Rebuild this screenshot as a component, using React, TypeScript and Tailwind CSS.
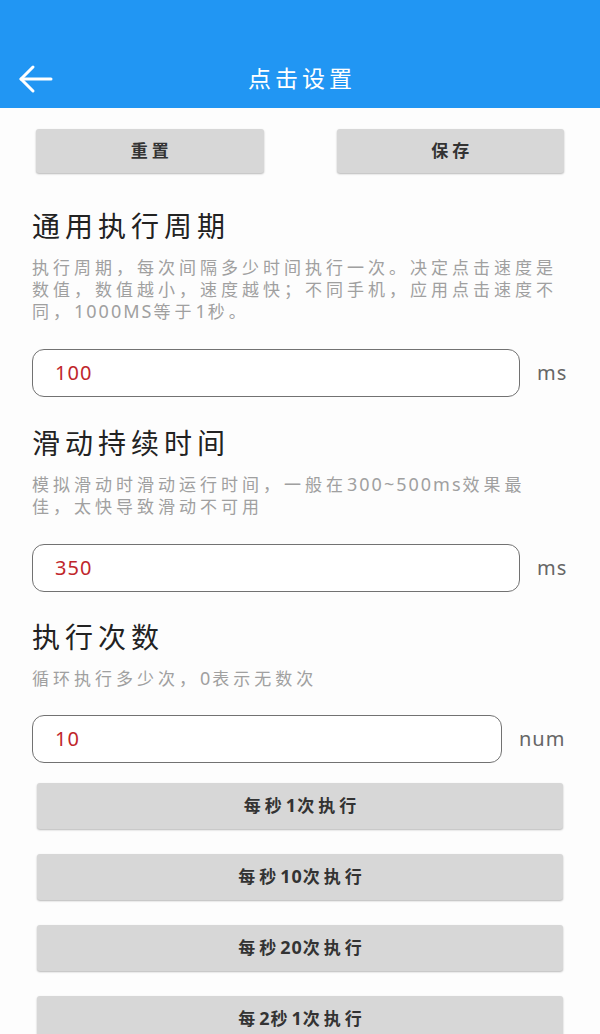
import React from 'react';

const font = { fontFamily: '"Noto Sans", "Noto Sans CJK SC", sans-serif' };

// latin runs get their own size/spacing, the CJK around them keeps the wide tracking
function Mixed({ text, latin }: { text: string; latin: string }) {
  const parts = text.split(/([0-9A-Za-z~]+)/);
  return (
    <>
      {parts.map((p, i) =>
        /^[0-9A-Za-z~]+$/.test(p) ? (
          <span key={i} className={latin}>
            {p}
          </span>
        ) : (
          <React.Fragment key={i}>{p}</React.Fragment>
        )
      )}
    </>
  );
}

function BackArrow() {
  return (
    <svg width="36" height="30" viewBox="0 0 36 30" fill="none" stroke="white" strokeWidth={3} strokeLinecap="round" strokeLinejoin="round">
      <path d="M3 15h30" />
      <path d="M15 3L3 15l12 12" />
    </svg>
  );
}

function GrayButton({ label, className = '' }: { label: string; className?: string }) {
  return (
    <button
      className={`flex items-center justify-center rounded-[3px] bg-[#d7d7d7] text-[17px] font-bold tracking-[4px] text-[#333] shadow-[0_1px_2px_rgba(0,0,0,0.28)] ${className}`}
    >
      <span className="pl-[4px]">
        <Mixed text={label} latin="text-[18px] leading-[18px] tracking-[1px]" />
      </span>
    </button>
  );
}

function ValueInput({ value, unit, boxWidth }: { value: string; unit: string; boxWidth: string }) {
  return (
    <div className="flex items-center gap-[17px] px-[32px]">
      <div className={`flex h-[48px] items-center rounded-[12px] border-[1.5px] border-[#727272] bg-white pl-[22px] ${boxWidth}`}>
        <span className="text-[20px] tracking-[1px] text-[#c0262b]">{value}</span>
      </div>
      <span className="text-[20px] tracking-[1px] text-[#666]">{unit}</span>
    </div>
  );
}

function Section({ title, lines, top }: { title: string; lines: string[]; top: string }) {
  return (
    <>
      <h2 className={`px-[32px] text-[28px] leading-[36px] tracking-[5px] text-[#222] ${top}`}>{title}</h2>
      <div className="mt-[13px] px-[32px] text-[17px] leading-[22px] tracking-[4px] text-[#a0a0a0]">
        {lines.map((l, i) => (
          <div key={i} className="h-[22px] whitespace-nowrap">
            <Mixed text={l} latin="text-[18px] leading-[18px] tracking-[2px]" />
          </div>
        ))}
      </div>
    </>
  );
}

export default function App() {
  return (
    <div className="min-h-[1034px] w-[600px] overflow-hidden bg-[#fdfdfd]" style={font}>
      {/* Top bar */}
      <div className="flex h-[108px] flex-col justify-end bg-[#2196f3]">
        <div className="relative flex h-[60px] items-center justify-center">
          <div className="absolute left-[18px] top-[16px]">
            <BackArrow />
          </div>
          <span className="pl-[4px] text-[23px] tracking-[4px] text-white">点击设置</span>
        </div>
      </div>

      {/* Reset / Save */}
      <div className="grid grid-cols-2 gap-[73px] px-[36px] pt-[21px]">
        <GrayButton label="重置" className="h-[44px]" />
        <GrayButton label="保存" className="h-[44px]" />
      </div>

      <Section
        top="mt-[35px]"
        title="通用执行周期"
        lines={[
          '执行周期，每次间隔多少时间执行一次。决定点击速度是',
          '数值，数值越小，速度越快；不同手机，应用点击速度不',
          '同，1000MS等于1秒。',
        ]}
      />
      <div className="mt-[26px]">
        <ValueInput value="100" unit="ms" boxWidth="w-[488px]" />
      </div>

      <Section
        top="mt-[28px]"
        title="滑动持续时间"
        lines={['模拟滑动时滑动运行时间，一般在300~500ms效果最', '佳，太快导致滑动不可用']}
      />
      <div className="mt-[26px]">
        <ValueInput value="350" unit="ms" boxWidth="w-[488px]" />
      </div>

      <Section top="mt-[27px]" title="执行次数" lines={['循环执行多少次，0表示无数次']} />
      <div className="mt-[25px]">
        <ValueInput value="10" unit="num" boxWidth="w-[470px]" />
      </div>

      {/* Presets */}
      <div className="mt-[20px] flex flex-col gap-[25px] px-[37px]">
        <GrayButton label="每秒1次执行" className="h-[46px]" />
        <GrayButton label="每秒10次执行" className="h-[46px]" />
        <GrayButton label="每秒20次执行" className="h-[46px]" />
        <GrayButton label="每2秒1次执行" className="h-[46px]" />
      </div>
    </div>
  );
}
